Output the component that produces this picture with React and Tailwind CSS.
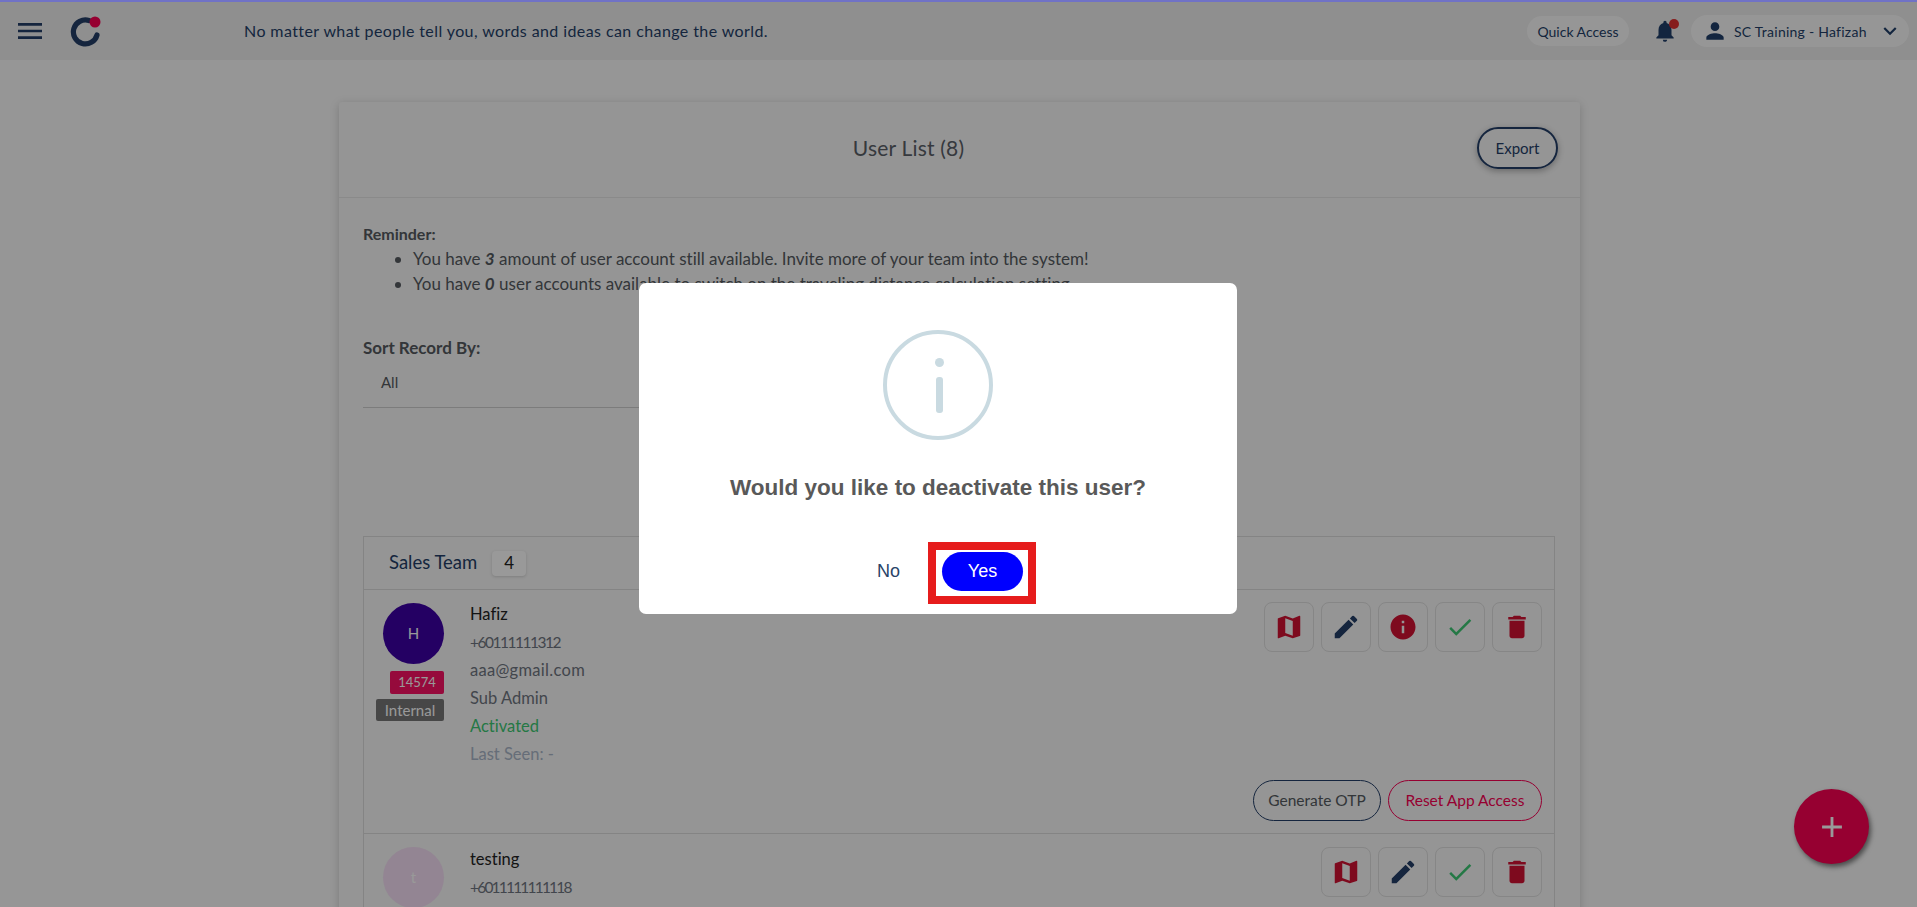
import React from "react";
import { MdMenu, MdNotifications, MdPerson, MdKeyboardArrowDown, MdMap, MdEdit, MdInfo, MdCheck, MdDelete, MdAdd } from "react-icons/md";

const font = "font-['Lato','Noto_Sans',sans-serif]";

function ActionBtn({ children }) {
  return (
    <div className="w-[50px] h-[50px] rounded-[8px] border border-[#dfdfdf] flex items-center justify-center">
      {children}
    </div>
  );
}

function Actions({ info }) {
  return (
    <div className="flex gap-[7px] justify-end">
      <ActionBtn><MdMap className="text-[#d21132]" size={30} /></ActionBtn>
      <ActionBtn><MdEdit className="text-[#243f68]" size={30} /></ActionBtn>
      {info && <ActionBtn><MdInfo className="text-[#d21132]" size={30} /></ActionBtn>}
      <ActionBtn><MdCheck className="text-[#3cc873]" size={30} /></ActionBtn>
      <ActionBtn><MdDelete className="text-[#d21132]" size={30} /></ActionBtn>
    </div>
  );
}

export default function App() {
  return (
    <div className={`relative h-[907px] overflow-hidden bg-[#fafafa] ${font} text-[#243f68] [font-variant-ligatures:none]`}>
      <header className="h-[60px] bg-[#eeeeee] flex items-center pl-[17px] pr-2 pt-[2px]">
        <MdMenu className="text-[#243f68] -ml-[3px]" size={32} />
        <svg width="32" height="32" viewBox="0 0 32 32" className="ml-[24px]">
          <path d="M19 5.5 A12 12 0 1 0 27 20" fill="none" stroke="#243f68" strokeWidth="5.2" strokeLinecap="round" />
          <circle cx="25" cy="7" r="5.5" fill="#fa0053" />
        </svg>
        <div className="ml-[142px] text-[16px] flex-1 tracking-[0.41px]">No matter what people tell you, words and ideas can change the world.</div>
        <div className="h-[30px] w-[102px] rounded-full bg-[#fbfbfb] flex items-center justify-center text-[14px]">Quick Access</div>
        <div className="relative ml-[23px] w-[26px] h-[30px] flex items-center justify-center">
          <MdNotifications className="text-[#213f69]" size={32} />
          <span className="absolute right-[-1px] top-[3px] w-[10px] h-[10px] rounded-full bg-[#e03030]" />
        </div>
        <div className="ml-[13px] h-[32px] w-[218px] rounded-full bg-[#fbfbfb] flex items-center pl-[11px] text-[14px]">
          <MdPerson className="text-[#213f69]" size={26} />
          <span className="ml-[6px] tracking-[0.25px]">SC Training - Hafizah</span>
          <MdKeyboardArrowDown className="text-[#213f69] ml-[10px]" size={26} />
        </div>
      </header>

      <main className="pt-[42px] pl-[339px]">
        <div className="w-[1241px] bg-[#f8f8f8] rounded-[3px] shadow-[0_2px_10px_rgba(0,0,0,0.18)]">
          <div className="relative h-[96px] border-b border-[#e6e6e6] flex items-center justify-center pr-[102px] pb-[4px]">
            <div className="text-[21px] text-[#5a6068] tracking-[0.2px]">User List (8)</div>
            <div className="absolute right-[22px] top-[25px] w-[81px] h-[42px] rounded-full border-2 border-[#243f68] flex items-center justify-center text-[15px] shadow-[0_2px_6px_rgba(0,0,0,0.3)]">Export</div>
          </div>
          <div className="pt-[23px] px-[24px] text-[17px] text-[#555a60]">
            <div className="font-bold leading-[25px] text-[16px]">Reminder:</div>
            <ul className="list-disc pl-[50px]">
              <li className="leading-[25px]">You have <b><i>3</i></b> amount of user account still available. Invite more of your team into the system!</li>
              <li className="leading-[25px]">You have <b><i>0</i></b> user accounts available to switch on the traveling distance calculation setting.</li>
            </ul>
            <div className="font-bold leading-[25px] mt-[39px]">Sort Record By:</div>
            <div className="w-[600px] h-[50px] -mt-[2px] border-b border-[#cfcfcf] pl-[18px] flex items-center text-[15px]">All</div>

            <div className="mt-[128px] w-[1192px] border border-[#dcdcdc]">
              <div className="h-[53px] border-b border-[#dcdcdc] flex items-center pl-[25px] text-[18.5px] text-[#243f68]">
                Sales Team
                <span className="ml-[15px] w-[34px] h-[25px] rounded-[4px] bg-white shadow-[0_1px_3px_rgba(0,0,0,0.15)] flex items-center justify-center text-[17px] text-[#222]">4</span>
              </div>

              <div className="h-[244px] border-b border-[#dcdcdc] flex pl-[12px] pr-[12px]">
                <div className="w-[68px] pt-[13px] flex flex-col items-end">
                  <div className="w-[61px] h-[61px] rounded-full bg-[#3c00a5] text-white flex items-center justify-center text-[15px]">H</div>
                  <div className="mt-[7px] w-[54px] h-[23px] rounded-[2px] bg-[#fa1264] text-white flex items-center justify-center text-[13px]">14574</div>
                  <div className="mt-[5px] w-[68px] h-[22px] rounded-[2px] bg-[#777777] text-white flex items-center justify-center text-[15px]">Internal</div>
                </div>
                <div className="ml-[26px] pt-[10px] text-[16.5px] leading-[28px] text-[#6f7580]">
                  <div className="text-[#222]">Hafiz</div>
                  <div className="text-[15.5px] tracking-[-1.5px]">+60111111312</div>
                  <div className="tracking-[0.3px]">aaa@gmail.com</div>
                  <div>Sub Admin</div>
                  <div className="text-[#3cc873]">Activated</div>
                  <div className="text-[#aab6c8]">Last Seen: -</div>
                </div>
                <div className="flex-1 pt-[12px] pb-[12px] flex flex-col justify-between">
                  <Actions info />
                  <div className="flex justify-end gap-[7px] text-[15.5px]">
                    <div className="w-[128px] h-[41px] rounded-full border border-[#243f68] flex items-center justify-center">Generate OTP</div>
                    <div className="w-[154px] h-[41px] rounded-full border border-[#fa0053] text-[#fa0053] flex items-center justify-center">Reset App Access</div>
                  </div>
                </div>
              </div>

              <div className="h-[120px] flex pl-[12px] pr-[12px]">
                <div className="w-[68px] pt-[13px] flex flex-col items-end">
                  <div className="w-[61px] h-[61px] rounded-full bg-[#f5def5] text-[#fff] flex items-center justify-center text-[15px]">t</div>
                </div>
                <div className="ml-[26px] pt-[11px] text-[16.5px] leading-[28px] text-[#6f7580]">
                  <div className="text-[#222]">testing</div>
                  <div className="text-[15.5px] tracking-[-1.8px]">+6011111111118</div>
                </div>
                <div className="flex-1 pt-[13px]"><Actions /></div>
              </div>
            </div>
          </div>
        </div>
      </main>

      <div className="absolute left-[1794px] top-[789px] w-[75px] h-[75px] rounded-full bg-[#fa0053] flex items-center justify-center shadow-[2px_3px_5px_rgba(0,0,0,0.5)]">
        <MdAdd className="text-white" size={34} />
      </div>

      <div className="absolute inset-0 bg-[rgba(0,0,0,0.4)]" />
      <div className="absolute top-0 left-0 right-0 h-[2px] bg-[#7072c6]" />

      <div className="absolute left-[639px] top-[283px] w-[598px] h-[331px] rounded-[7px] bg-white flex flex-col items-center font-['Liberation_Sans',sans-serif]">
        <div className="mt-[47px] w-[110px] h-[110px] rounded-full border-[4px] border-[#c9dae1] relative">
          <span className="absolute left-[48px] top-[24px] w-[9px] h-[9px] rounded-full bg-[#c9dae1]" />
          <span className="absolute left-[49px] top-[43px] w-[7px] h-[36px] rounded-[3px] bg-[#c9dae1]" />
        </div>
        <div className="mt-[32px] text-[22.5px] leading-[32px] font-bold text-[#595959]">Would you like to deactivate this user?</div>
        <div className="relative mt-[48px] ml-[24px] flex items-center text-[18px]">
          <div className="w-[22px] text-[#2a4468]">No</div>
          <div className="ml-[43px] w-[81px] h-[39px] rounded-full bg-[#0000ff] text-white flex items-center justify-center">Yes</div>
          <div className="absolute left-[51px] top-[-10px] w-[108px] h-[62px] border-[8px] border-[#e61c1c]" />
        </div>
      </div>
    </div>
  );
}
